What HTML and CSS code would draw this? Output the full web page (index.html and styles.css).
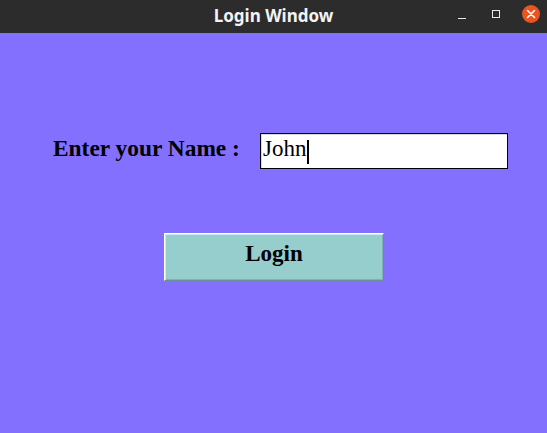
FILE: index.html
```html
<!DOCTYPE html>
<html>
<head>
<meta charset="utf-8">
<link rel="stylesheet" href="styles.css">
</head>
<body>
<div class="window">
  <div class="titlebar">
    <div class="title">Login Window</div>
    <div class="controls">
      <span class="ctl min"></span>
      <span class="ctl max"></span>
      <span class="ctl close">
        <svg width="18" height="18" viewBox="0 0 18 18"><path d="M5.5 5.5 L12.5 12.5 M12.5 5.5 L5.5 12.5" stroke="#fff" stroke-width="1.6" stroke-linecap="round"/></svg>
      </span>
    </div>
  </div>
  <div class="content">
    <div class="row">
      <label class="label">Enter your Name :</label>
      <div class="entry"><span class="entry-text">John</span><span class="caret"></span></div>
    </div>
    <button class="btn">Login</button>
  </div>
</div>
</body>
</html>
```
FILE: styles.css
```css
html, body {
  margin: 0;
  padding: 0;
  width: 547px;
  height: 433px;
  overflow: hidden;
}
.window {
  width: 547px;
  height: 433px;
  background: #8470ff;
  display: flex;
  flex-direction: column;
}
.titlebar {
  height: 33px;
  background: #2c2c2c;
  position: relative;
  display: flex;
  align-items: center;
  justify-content: center;
  flex-shrink: 0;
}
.title {
  color: #f3f3f3;
  font-family: "Noto Sans", "DejaVu Sans", sans-serif;
  font-weight: bold;
  font-size: 17px;
  margin-top: -3px;
}
.controls {
  position: absolute;
  right: 7px;
  top: 5px;
  display: flex;
  align-items: center;
  gap: 0;
}
.ctl {
  display: block;
}
.min {
  width: 8px;
  height: 1px;
  background: #e8e8e8;
  margin-top: 8px;
  margin-right: 26px;
}
.max {
  width: 6px;
  height: 6px;
  border: 1px solid #e8e8e8;
  margin-right: 22px;
}
.close {
  width: 18px;
  height: 18px;
  border-radius: 50%;
  background: #e95420;
}
.close svg {
  display: block;
}
.content {
  padding: 100px 0 0 53px;
  font-family: "Liberation Serif", "Times New Roman", serif;
}
.row {
  display: flex;
  align-items: center;
  height: 36px;
}
.label {
  font-weight: bold;
  font-size: 23.4px;
  width: 207px;
  color: #000;
  margin-top: -5px;
}
.entry {
  box-sizing: border-box;
  width: 248px;
  height: 36px;
  background: #fff;
  border: 1px solid #000;
  box-shadow: inset 1px 1px 0 #d9d9d9;
  display: flex;
  align-items: center;
  padding-left: 2px;
  font-size: 23px;
  color: #000;
}
.entry-text {
  margin-top: -4px;
}
.caret {
  width: 2px;
  height: 24px;
  background: #000;
  margin-left: 1px;
  margin-top: 1px;
}
.btn {
  display: block;
  margin: 64px 0 0 111px;
  box-sizing: border-box;
  width: 220px;
  height: 48px;
  background: #96cdcd;
  border: 1px solid;
  border-color: #ffffff #6b8f8f #6b8f8f #ffffff;
  box-shadow: inset 1px 1px 0 #c9eaea, inset -1px -1px 0 #80b0b0;
  font-family: "Liberation Serif", "Times New Roman", serif;
  font-weight: bold;
  font-size: 23px;
  color: #000;
  padding: 0 0 6px 0;
}
```
